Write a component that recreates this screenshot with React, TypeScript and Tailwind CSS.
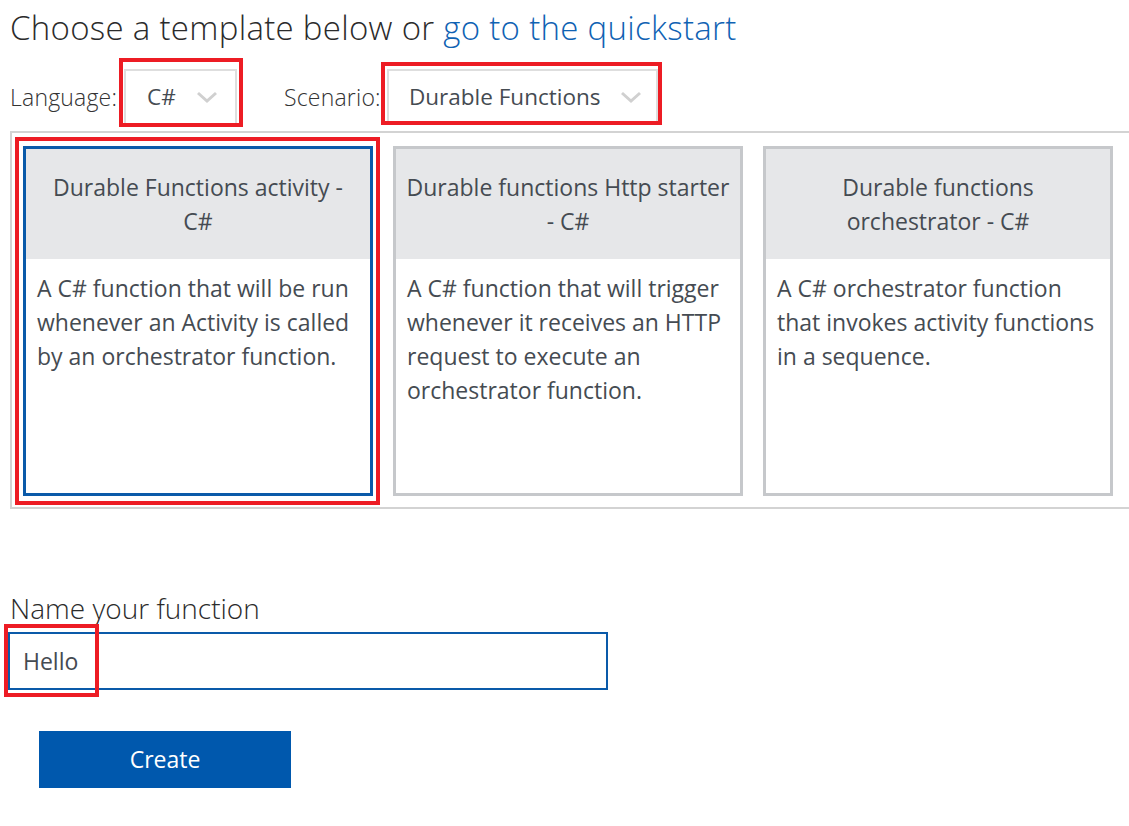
import React from "react";

function Chevron() {
  return (
    <svg width="22" height="14" viewBox="0 0 22 14" className="shrink-0">
      <polyline points="2,3 11,11 20,3" fill="none" stroke="#d0d0d0" strokeWidth="3" />
    </svg>
  );
}

type Card = { title: string[]; body: string[]; selected?: boolean };

const cards: Card[] = [
  {
    title: ["Durable Functions activity -", "C#"],
    body: ["A C# function that will be run", "whenever an Activity is called", "by an orchestrator function."],
    selected: true,
  },
  {
    title: ["Durable functions Http starter", "- C#"],
    body: ["A C# function that will trigger", "whenever it receives an HTTP", "request to execute an", "orchestrator function."],
  },
  {
    title: ["Durable functions", "orchestrator - C#"],
    body: ["A C# orchestrator function", "that invokes activity functions", "in a sequence."],
  },
];

export default function App() {
  return (
    <div className="w-[1129px] h-[826px] overflow-hidden bg-white font-['Open_Sans','Noto_Sans',sans-serif] text-[#333]">
      <h1 className="pl-[10px] pt-[8px] text-[33px] tracking-[0.3px] leading-[40px] font-light text-[#2b2b2b] whitespace-nowrap">
        Choose a template below or <a className="text-[#0f62b3]">go to the quickstart</a>
      </h1>

      <div className="flex items-center mt-[21px] h-[56px]">
        <span className="pl-[10px] w-[124px] text-[23px] font-light tracking-[0.2px] text-[#333]">Language:</span>
        <div className="relative">
          <div className="flex items-center w-[113px] h-[56px] border-2 border-[#dedede] pl-[21px] pr-[17px] justify-between text-[22.5px] text-[#454b52]">
            <span>C#</span>
            <Chevron />
          </div>
          <div className="absolute left-[-5px] right-[-6px] top-[-11px] bottom-[-2px] border-4 border-[#ed1c24]" />
        </div>
        <span className="ml-[47px] w-[103px] text-[23px] font-light tracking-[0.2px] text-[#333]">Scenario:</span>
        <div className="relative">
          <div className="flex items-center w-[271px] h-[56px] border-2 border-[#dedede] pl-[20px] pr-[14px] justify-between text-[22.5px] text-[#454b52]">
            <span>Durable Functions</span>
            <Chevron />
          </div>
          <div className="absolute left-[-6px] right-[-4px] top-[-7px] bottom-[0px] border-4 border-[#ed1c24]" />
        </div>
      </div>

      <div className="ml-[10px] mt-[6px] w-[1140px] border-2 border-[#d3d3d3] pl-[11px] pt-[13px] pb-[11px] flex gap-[20px]">
        {cards.map((c, i) => (
          <div key={i} className="relative">
            <div
              className={
                "w-[350px] h-[350px] border-[3px] flex flex-col " +
                (c.selected ? "border-[#0a5aa9]" : "border-[#c6c8cb]")
              }
            >
              <div className="h-[110px] bg-[#e6e7e9] flex flex-col items-center justify-center text-[23px] leading-[34px] text-[#454b52] whitespace-nowrap">
                {c.title.map((t, j) => (
                  <div key={j}>{t}</div>
                ))}
              </div>
              <div className="px-[11px] pt-[12px] text-[23px] leading-[34px] text-[#454b52] whitespace-nowrap">
                {c.body.map((t, j) => (
                  <div key={j}>{t}</div>
                ))}
              </div>
            </div>
            {c.selected && (
              <div className="absolute left-[-8px] right-[-7px] top-[-9px] bottom-[-9px] border-4 border-[#ed1c24]" />
            )}
          </div>
        ))}
      </div>

      <div className="pl-[10px] mt-[80px] text-[28px] leading-[38px] font-light text-[#2b2b2b]">Name your function</div>

      <div className="relative ml-[8px] mt-[5px] w-[600px]">
        <div className="h-[58px] border-2 border-[#0a5aa9] flex items-center pl-[13px] text-[23px] text-[#454b52]">
          Hello
        </div>
        <div className="absolute left-[-4px] top-[-8px] w-[95px] h-[73px] border-4 border-[#ed1c24]" />
      </div>

      <button className="ml-[39px] mt-[41px] w-[252px] h-[57px] bg-[#0058ad] text-white text-[23px] flex items-center justify-center">
        Create
      </button>
    </div>
  );
}
